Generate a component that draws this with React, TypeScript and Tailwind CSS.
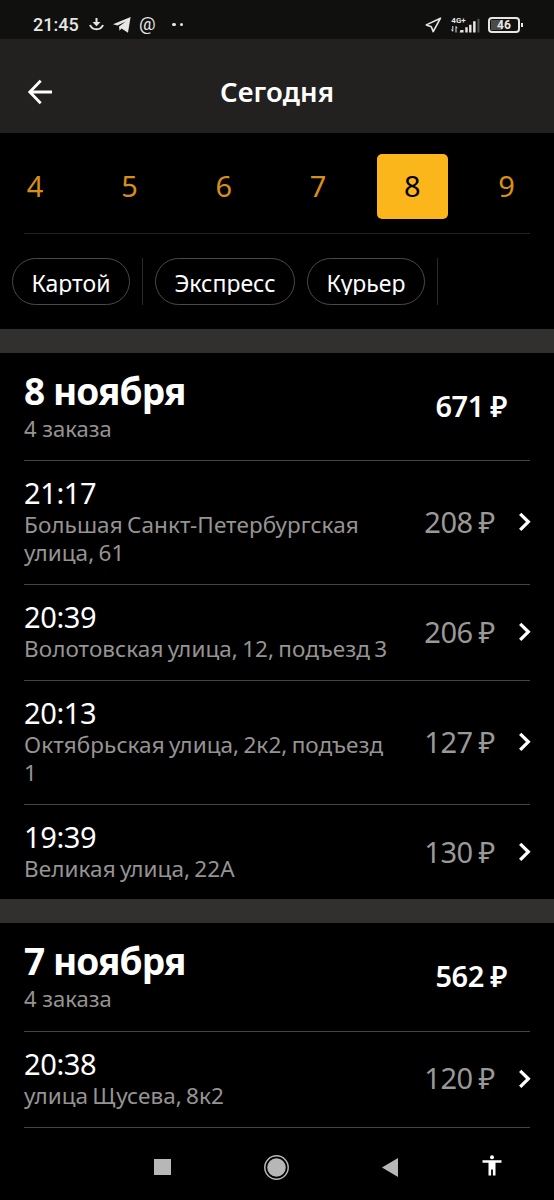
import React from 'react';

interface Order {
  time: string;
  address: string;
  price: number;
}

interface Day {
  title: string;
  count: string;
  total: number;
  orders: Order[];
}

const DATES = [4, 5, 6, 7, 8, 9];
const ACTIVE_DATE = 8;

const DAYS: Day[] = [
  {
    title: '8 ноября',
    count: '4 заказа',
    total: 671,
    orders: [
      { time: '21:17', address: 'Большая Санкт-Петербургская улица, 61', price: 208 },
      { time: '20:39', address: 'Волотовская улица, 12, подъезд 3', price: 206 },
      { time: '20:13', address: 'Октябрьская улица, 2к2, подъезд 1', price: 127 },
      { time: '19:39', address: 'Великая улица, 22А', price: 130 },
    ],
  },
  {
    title: '7 ноября',
    count: '4 заказа',
    total: 562,
    orders: [{ time: '20:38', address: 'улица Щусева, 8к2', price: 120 }],
  },
];

const StatusBar: React.FC = () => (
  <div className="flex h-[39px] shrink-0 items-center bg-[#10100e] pt-[10px] pr-[31px] pl-[33px] font-['Roboto',sans-serif] text-[#e6e6e4]">
    <span className="w-[56px] text-[18px] leading-none font-medium">21:45</span>
    {/* Download */}
    <svg className="-mt-px" width="15" height="13" viewBox="0 0 15 13" fill="none" stroke="currentColor" strokeWidth="2">
      <path d="M7.500 0v6" />
      <path d="M3.500 4h8l-4 4.300z" fill="currentColor" stroke="none" />
      <path d="M1 7c1.200 3 3.300 4.300 6.500 4.300S12.800 10 14 7" />
    </svg>
    {/* Telegram */}
    <svg className="ml-[9px]" width="18" height="16" viewBox="0 0 18 16" fill="currentColor">
      <path d="M17.600 0 15 15.800 8.500 11.500 6.500 13.800 6 9.500 12.800 4.400 4.500 8.600 0 7.200z" />
    </svg>
    {/* Mail */}
    <span className="ml-2 w-[18px] text-[18.500px] leading-none">@</span>
    <span className="ml-[15px] flex gap-1">
      <i className="size-[3.5px] rounded-full bg-current" />
      <i className="size-[3.5px] rounded-full bg-current" />
    </span>
    {/* Location */}
    <svg className="ml-auto" width="17" height="16" viewBox="0 0 17 16" fill="none" stroke="currentColor" strokeWidth="1.600" strokeLinejoin="round">
      <path d="M15.500 1.200 1.300 7.900 6.300 9.700 8.200 14.600z" />
    </svg>
    {/* Mobile network */}
    <svg className="ml-[9px]" width="30" height="17" viewBox="0 0 30 17" fill="currentColor">
      <text x="0.300" y="6.600" fontSize="8" fontWeight="700">4G+</text>
      <path d="M9.500 14h3v2.500h-4zM14.300 11.300h2.400v5.200h-2.400zM18.100 8.800h2.400v7.700h-2.400zM22.100 5.300h2.500v11.200h-2.500z" />
      <path d="M1.800 10v5M5 16.500v-6M0.500 13.500l1.300 2M5 10.500l1.200 1.700" stroke="currentColor" strokeWidth="1" />
      <path d="M26.400 2.800h2.100v13.700h-2.100z" opacity=".3" />
    </svg>
    {/* Battery */}
    <span className="ml-[7px] flex h-4 w-8 items-center justify-center rounded-[4px] border-2 border-current p-px text-[12px] leading-none font-bold">
      <span className="flex h-full w-full items-center justify-center bg-[linear-gradient(90deg,#4b4b49_42%,transparent_42%)] pt-px">46</span>
    </span>
    <span className="ml-px h-1 w-[2px] bg-current" />
  </div>
);

const Header: React.FC = () => (
  <header className="grid h-[94px] shrink-0 grid-cols-[80px_1fr_80px] items-center bg-[#222120] pt-[11px]">
    <svg className="ml-[27px]" width="26" height="26" viewBox="0 0 26 26" fill="none" stroke="white" strokeWidth="2.800">
      <path d="M13.700 1.800 2.800 13l10.900 11.200M2.500 13H25" />
    </svg>
    <h1 className="text-center text-[27.500px] leading-8 font-semibold tracking-[0.1px] text-white">Сегодня</h1>
  </header>
);

const DateStrip: React.FC = () => (
  <div className="-ml-3 flex h-[100px] pt-[21px]">
    {DATES.map((date) => (
      <div key={date} className="flex w-[94.300px] shrink-0 justify-center">
        <span
          className={
            date === ACTIVE_DATE
              ? 'flex h-[65px] w-[71px] items-center justify-center rounded-[5px] bg-[#fbb61b] pb-px text-[29px] text-black'
              : 'flex h-[65px] w-[71px] items-center justify-center pb-px text-[29px] text-[#d88f15]'
          }
        >
          {date}
        </span>
      </div>
    ))}
  </div>
);

const Chip: React.FC<{ label: string; className: string }> = ({ label, className }) => (
  <span className={`flex h-[47px] items-center justify-center rounded-full border border-[#4a4a48] text-[23px] text-white ${className}`}>
    <span className="mt-[3px] h-[23px] overflow-hidden leading-[22px] whitespace-nowrap">{label}</span>
  </span>
);

const Filters: React.FC = () => (
  <div className="flex h-[94.600px] pt-6 pl-3">
    <Chip label="Картой" className="w-[118px]" />
    <i className="mx-3 h-[47px] w-px bg-[#2a2a29]" />
    <Chip label="Экспресс" className="w-[140px]" />
    <Chip label="Курьер" className="ml-3 w-[118px]" />
    <i className="mx-3 h-[47px] w-px bg-[#2a2a29]" />
  </div>
);

const OrderRow: React.FC<{ order: Order }> = ({ order }) => (
  <li className="mx-6 flex items-center border-t border-[#454443] pt-[15px] pb-4 last:pb-[15px]">
    <div className="w-[372px] pb-px">
      <p className="text-[29px] leading-[34px] tracking-[-0.4px] text-white">{order.time}</p>
      <p className="mt-px text-[22.500px] leading-7 tracking-[0.070px] text-[#969492] [word-spacing:-1.700px]">{order.address}</p>
    </div>
    <span className="ml-auto pb-px text-[29px] leading-9 tracking-[-0.5px] whitespace-nowrap text-[#9b9997] [word-spacing:-1px]">
      {order.price} ₽
    </span>
    <svg className="-mr-px ml-6" width="12" height="20" viewBox="0 0 12 20" fill="none" stroke="white" strokeWidth="3.300">
      <path d="M1.200 1.800 9.300 9.800l-8.100 8" />
    </svg>
  </li>
);

const DaySection: React.FC<{ day: Day }> = ({ day }) => (
  <section className="border-t-[24px] border-[#31302e]">
    <div className="flex h-[107.600px] items-center justify-between pr-[47px] pl-6">
      <div className="pb-px">
        <h2 className="text-[37px] leading-[42px] font-bold tracking-[-0.900px] text-white">{day.title}</h2>
        <p className="mt-[2px] text-[22px] leading-7 text-[#969492]">{day.count}</p>
      </div>
      <span className="pb-[2px] text-[29px] font-semibold tracking-[-0.500px] text-white [word-spacing:-0.500px]">{day.total} ₽</span>
    </div>
    <ul>
      {day.orders.map((order) => (
        <OrderRow key={order.time} order={order} />
      ))}
    </ul>
  </section>
);

const NavBar: React.FC = () => (
  <nav className="mt-auto flex h-[66px] shrink-0 items-center bg-black pl-[154px]">
    <i className="size-[16.500px] bg-[#b7b7b7]" />
    <svg className="ml-[92px]" width="27" height="27" viewBox="0 0 27 27">
      <circle cx="13.500" cy="13.500" r="11.700" fill="none" stroke="#b7b7b7" strokeWidth="1.500" />
      <circle cx="13.500" cy="13.500" r="9.300" fill="#b7b7b7" />
    </svg>
    <svg className="ml-[92px]" width="16" height="19" viewBox="0 0 16 19" fill="#b7b7b7">
      <path d="M0 9.500 16 0v19z" />
    </svg>
    {/* Accessibility */}
    <svg className="-mt-[3px] ml-[84px]" width="20" height="21" viewBox="0 0 20 21" fill="white">
      <circle cx="10" cy="2.200" r="2" />
      <path d="M0.500 5.300h19v2.500h-6V20.500h-2.600v-6H9.100v6H6.500V7.800h-6z" />
    </svg>
  </nav>
);

export default function App() {
  return (
    <div className="flex h-[1200px] w-[554px] flex-col overflow-hidden bg-black font-['Noto_Sans',sans-serif]">
      <StatusBar />
      <Header />
      <DateStrip />
      <div className="mx-6 h-px shrink-0 bg-[#232322]" />
      <Filters />
      {DAYS.map((day) => (
        <DaySection key={day.title} day={day} />
      ))}
      <div className="mx-6 mt-px h-px shrink-0 bg-[#454443]" />
      <NavBar />
    </div>
  );
}
